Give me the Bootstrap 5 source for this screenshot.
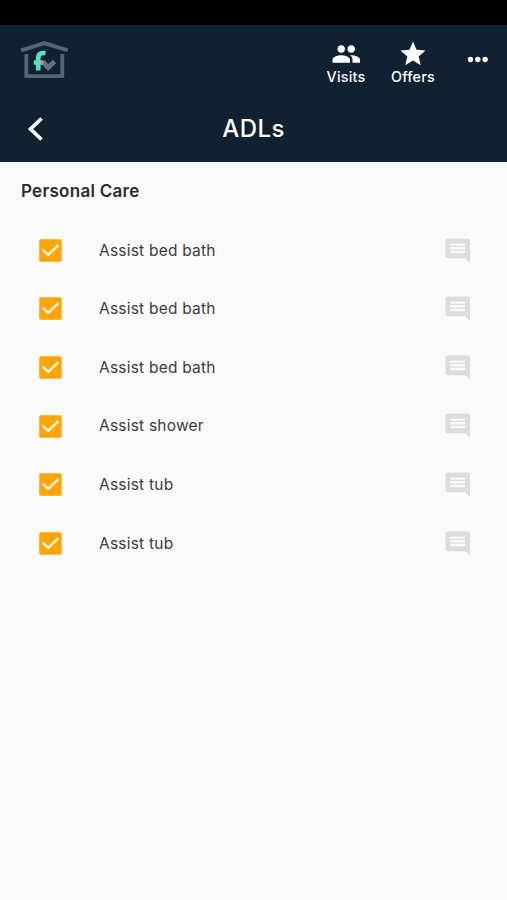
<!DOCTYPE html>
<html lang="en">
<head>
<meta charset="utf-8">
<meta name="viewport" content="width=device-width, initial-scale=1">
<title>ADLs</title>
<link href="https://cdn.jsdelivr.net/npm/bootstrap@5.3.0/dist/css/bootstrap.min.css" rel="stylesheet">
<style>
body{font-family:Inter,"Liberation Sans",sans-serif;background:#fafafa;color:#2c2c2e;height:900px;overflow:hidden}
svg{display:block;flex:none}
.statusbar{height:25px;background:#000}
.app-head{height:137px;background:#102131;color:#fff}
.brandbar{height:69px;padding:0 18px 0 20px}
.brand-logo{margin-top:15px}
.menu-item{color:#fff;text-decoration:none;font-size:14.3px;line-height:16px;font-weight:500;letter-spacing:.25px;padding-top:14px}
.menu-item svg{height:30px}
.item-visits{width:52px;margin-right:15px}
.item-offers{width:52px;margin-right:28px}
.item-more{padding-top:19px}
.titlebar{height:70px;display:grid;grid-template-columns:1fr auto 1fr}
.back{padding-left:27px;padding-bottom:1px}
.titlebar h1{font-size:24px;font-weight:500;letter-spacing:.4px;line-height:30px}
.section-title{font-size:17px;line-height:20px;font-weight:600;letter-spacing:.28px;padding:19px 21px 0;height:59px}
.task{height:58.6px;padding:0 34.5px 0 38.5px;font-size:15.5px;letter-spacing:.22px;color:#3c3c3e}
.task-name{margin-left:37.5px}
</style>
<script src="https://cdn.jsdelivr.net/npm/bootstrap@5.3.0/dist/js/bootstrap.bundle.min.js"></script>
</head>
<body>
<svg class="d-none">
<symbol id="check" viewBox="0 0 23 23"><rect x=".2" y=".3" width="22.5" height="22.500" rx="1.5" fill="#ffa50a"/><path d="M3.800 10.700 9.200 15.900 19.500 6" fill="none" stroke="#fffbe8" stroke-width="2.300"/></symbol>
<symbol id="comment" viewBox="0 0 24 24"><path fill="#dcdcdc" d="M21.99 4c0-1.1-.89-2-1.99-2H4c-1.1 0-2 .9-2 2v12c0 1.1.9 2 2 2h14l4 4-.01-18zM18 14H6v-2h12v2zm0-3H6V9h12v2zm0-3H6V6h12v2z"/></symbol>
</svg>
<div class="statusbar"></div>
<header class="app-head">
  <div class="brandbar d-flex align-items-start">
    <svg class="brand-logo me-auto" width="49" height="39" viewBox="0 0 49 39">
      <path d="M1.2 10.3 24.5 3.2 47.8 10.3" fill="none" stroke="#56657a" stroke-width="4"/>
      <path d="M6.3 14V36.2H42.3V14" fill="none" stroke="#56657a" stroke-width="3.8"/>
      <path d="M22.5 21.500 28.2 27.5 34.500 21.500" fill="none" stroke="#66728a" stroke-width="4.800"/>
      <path d="M25.5 13.2C20.5 12.4 18.2 14.2 18.2 18.5V30.5M13.8 22.5H22.5" fill="none" stroke="#5de0c0" stroke-width="4.7"/>
      <circle cx="22.2" cy="22.6" r="1.8" fill="#c28c7e"/>
    </svg>
    <a href="#" class="menu-item item-visits d-flex flex-column align-items-center">
      <svg width="30.5" height="30" viewBox="0 0 24 24" fill="#fff"><path d="M16 11c1.66 0 2.99-1.34 2.99-3S17.66 5 16 5s-3 1.34-3 3 1.34 3 3 3zm-8 0c1.66 0 2.99-1.34 2.99-3S9.66 5 8 5 5 6.34 5 8s1.34 3 3 3zm0 2c-2.33 0-7 1.17-7 3.5V19h14v-2.5c0-2.33-4.67-3.5-7-3.5zm8 0c-.29 0-.62.02-.97.05 1.16.84 1.97 1.97 1.97 3.45V19h6v-2.5c0-2.33-4.67-3.5-7-3.5z"/></svg>
      <span>Visits</span>
    </a>
    <a href="#" class="menu-item item-offers d-flex flex-column align-items-center">
      <svg width="30" height="30" viewBox="0 0 24 24" fill="#fff"><path d="M12 17.27 18.18 21l-1.64-7.03L22 9.24l-7.19-.61L12 2 9.19 8.63 2 9.24l5.46 4.73L5.82 21z"/></svg>
      <span>Offers</span>
    </a>
    <a href="#" class="menu-item item-more" aria-label="More">
      <svg width="22" height="30" viewBox="0 0 22 30" fill="#fff"><circle cx="3.5" cy="15.5" r="2.7"/><circle cx="10.8" cy="15.5" r="2.7"/><circle cx="18.1" cy="15.5" r="2.7"/></svg>
    </a>
  </div>
  <div class="titlebar align-items-center">
    <a href="#" class="back" aria-label="Back"><svg width="18" height="26" viewBox="0 0 18 26"><path d="M14.500 2.500 3.500 13 14.500 23.500" fill="none" stroke="#fff" stroke-width="3.700"/></svg></a>
    <h1 class="m-0">ADLs</h1>
  </div>
</header>
<main>
  <h2 class="section-title m-0">Personal Care</h2>
  <ul class="list-unstyled m-0">
    <li class="task d-flex align-items-center"><svg width="23" height="23"><use href="#check"/></svg><span class="task-name me-auto">Assist bed bath</span><svg width="29.5" height="29.5"><use href="#comment"/></svg></li>
    <li class="task d-flex align-items-center"><svg width="23" height="23"><use href="#check"/></svg><span class="task-name me-auto">Assist bed bath</span><svg width="29.5" height="29.5"><use href="#comment"/></svg></li>
    <li class="task d-flex align-items-center"><svg width="23" height="23"><use href="#check"/></svg><span class="task-name me-auto">Assist bed bath</span><svg width="29.5" height="29.5"><use href="#comment"/></svg></li>
    <li class="task d-flex align-items-center"><svg width="23" height="23"><use href="#check"/></svg><span class="task-name me-auto">Assist shower</span><svg width="29.5" height="29.5"><use href="#comment"/></svg></li>
    <li class="task d-flex align-items-center"><svg width="23" height="23"><use href="#check"/></svg><span class="task-name me-auto">Assist tub</span><svg width="29.5" height="29.5"><use href="#comment"/></svg></li>
    <li class="task d-flex align-items-center"><svg width="23" height="23"><use href="#check"/></svg><span class="task-name me-auto">Assist tub</span><svg width="29.5" height="29.5"><use href="#comment"/></svg></li>
  </ul>
</main>
</body>
</html>
